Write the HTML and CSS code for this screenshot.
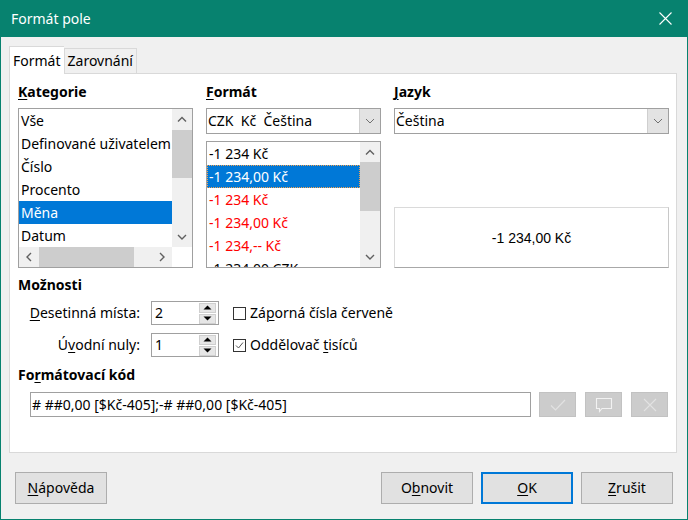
FILE: index.html
```html
<!DOCTYPE html>
<html lang="cs">
<head>
<meta charset="utf-8">
<title>Formát pole</title>
<link rel="stylesheet" href="styles.css">
</head>
<body>
<div class="window">
  <div class="titlebar">
    <span class="title">Formát pole</span>
    <svg class="close" width="13" height="13" viewBox="0 0 13 13"><path d="M0.5 0.5 L12.5 12.5 M12.5 0.5 L0.5 12.5" stroke="#fff" stroke-width="1.1" fill="none"/></svg>
  </div>
  <div class="content">
    <div class="tabs">
      <div class="tab active">Formát</div>
      <div class="tab">Zarovnání</div>
    </div>
    <div class="panel">
      <div class="top-grid">
        <div class="col">
          <div class="label"><u>K</u>ategorie</div>
          <div class="listbox cat">
            <div class="items">
              <div class="item">Vše</div>
              <div class="item">Definované uživatelem</div>
              <div class="item">Číslo</div>
              <div class="item">Procento</div>
              <div class="item sel">Měna</div>
              <div class="item">Datum</div>
            </div>
            <div class="vscroll">
              <span class="arr"><svg width="20" height="20" viewBox="0 0 20 20"><polyline points="6,12.5 10,8.5 14,12.5" fill="none" stroke="#606060" stroke-width="1.4"/></svg></span>
              <span class="track"><span class="thumb cat-thumb"></span></span>
              <span class="arr"><svg width="20" height="20" viewBox="0 0 20 20"><polyline points="6,8 10,12 14,8" fill="none" stroke="#606060" stroke-width="1.4"/></svg></span>
            </div>
            <div class="hscroll">
              <span class="arr"><svg width="20" height="20" viewBox="0 0 20 20"><polyline points="12,6 8,10 12,14" fill="none" stroke="#606060" stroke-width="1.4"/></svg></span>
              <span class="htrack"><span class="hthumb"></span></span>
              <span class="arr"><svg width="20" height="20" viewBox="0 0 20 20"><polyline points="8,6 12,10 8,14" fill="none" stroke="#606060" stroke-width="1.4"/></svg></span>
            </div>
            <div class="corner"></div>
          </div>
        </div>
        <div class="col">
          <div class="label"><u>F</u>ormát</div>
          <div class="combo">
            <span class="combo-text">CZK  Kč  Čeština</span>
            <span class="combo-btn"><svg width="10" height="6" viewBox="0 0 10 6"><polyline points="1,1 5,5 9,1" fill="none" stroke="#707070" stroke-width="1"/></svg></span>
          </div>
          <div class="listbox fmt">
            <div class="items">
              <div class="item">-1 234 Kč</div>
              <div class="item sel focus">-1 234,00 Kč</div>
              <div class="item red">-1 234 Kč</div>
              <div class="item red">-1 234,00 Kč</div>
              <div class="item red">-1 234,-- Kč</div>
              <div class="item">-1 234,00 CZK</div>
            </div>
            <div class="vscroll">
              <span class="arr"><svg width="20" height="20" viewBox="0 0 20 20"><polyline points="6,12.5 10,8.5 14,12.5" fill="none" stroke="#606060" stroke-width="1.4"/></svg></span>
              <span class="track"><span class="thumb fmt-thumb"></span></span>
              <span class="arr"><svg width="20" height="20" viewBox="0 0 20 20"><polyline points="6,8 10,12 14,8" fill="none" stroke="#606060" stroke-width="1.4"/></svg></span>
            </div>
          </div>
        </div>
        <div class="col">
          <div class="label"><u>J</u>azyk</div>
          <div class="combo">
            <span class="combo-text">Čeština</span>
            <span class="combo-btn"><svg width="10" height="6" viewBox="0 0 10 6"><polyline points="1,1 5,5 9,1" fill="none" stroke="#707070" stroke-width="1"/></svg></span>
          </div>
          <div class="preview">-1 234,00 Kč</div>
        </div>
      </div>

      <div class="label section-label">Možnosti</div>
      <div class="options">
        <span class="opt-label"><u>D</u>esetinná místa:</span>
        <div class="spin">
          <span class="spin-val">2</span>
          <span class="spin-btns">
            <span class="sb"><svg width="9" height="5" viewBox="0 0 9 5"><polygon points="0.5,4.5 4.5,0.5 8.5,4.5" fill="#000"/></svg></span>
            <span class="sb"><svg width="9" height="5" viewBox="0 0 9 5"><polygon points="0.5,0.5 4.5,4.5 8.5,0.5" fill="#000"/></svg></span>
          </span>
        </div>
        <label class="check"><span class="box"></span><span>Zá<u>p</u>orná čísla červeně</span></label>

        <span class="opt-label">Ú<u>v</u>odní nuly:</span>
        <div class="spin">
          <span class="spin-val">1</span>
          <span class="spin-btns">
            <span class="sb"><svg width="9" height="5" viewBox="0 0 9 5"><polygon points="0.5,4.5 4.5,0.5 8.5,4.5" fill="#000"/></svg></span>
            <span class="sb"><svg width="9" height="5" viewBox="0 0 9 5"><polygon points="0.5,0.5 4.5,4.5 8.5,0.5" fill="#000"/></svg></span>
          </span>
        </div>
        <label class="check"><span class="box"><svg width="11" height="11" viewBox="0 0 11 11"><polyline points="2,5.5 4.5,8 9,2.5" fill="none" stroke="#555" stroke-width="1"/></svg></span><span>Oddělovač <u>t</u>isíců</span></label>
      </div>

      <div class="label section-label code-label">Fo<u>r</u>mátovací kód</div>
      <div class="code-row">
        <div class="code-input"># ##0,00 [$Kč-405];-# ##0,00 [$Kč-405]</div>
        <span class="tool-btn"><svg width="16" height="12" viewBox="0 0 16 12"><polyline points="1,6.5 5.5,11 15,1" fill="none" stroke="#e2e2e2" stroke-width="1.2"/></svg></span>
        <span class="tool-btn"><svg width="18" height="16" viewBox="0 0 18 16"><path d="M1.5 1.5 H16.5 V11.5 H7 L4.5 14.5 V11.5 H1.5 Z" fill="none" stroke="#f2f2f2" stroke-width="1.1"/></svg></span>
        <span class="tool-btn"><svg width="14" height="14" viewBox="0 0 14 14"><path d="M1 1 L13 13 M13 1 L1 13" stroke="#e2e2e2" stroke-width="1.1" fill="none"/></svg></span>
      </div>
    </div>

    <div class="buttons">
      <span class="btn"><u>N</u>ápověda</span>
      <span class="spacer"></span>
      <span class="btn">O<u>b</u>novit</span>
      <span class="btn default"><u>O</u>K</span>
      <span class="btn"><u>Z</u>rušit</span>
    </div>
  </div>
</div>
</body>
</html>
```

FILE: styles.css
```css
html, body {
  margin: 0;
  padding: 0;
}
body {
  width: 688px;
  height: 520px;
  font-family: "Noto Sans", "Open Sans", sans-serif;
  font-size: 14px;
  line-height: 20px;
  color: #000;
  overflow: hidden;
}
u {
  text-decoration: underline;
  text-underline-offset: 2px;
  text-decoration-thickness: 1px;
}
.window {
  box-sizing: border-box;
  width: 688px;
  height: 520px;
  border: 1px solid #07826f;
  border-top: none;
  background: #f0f0f0;
  display: flex;
  flex-direction: column;
}
.titlebar {
  height: 37px;
  flex: none;
  background: #07826f;
  color: #fff;
  display: flex;
  align-items: center;
  justify-content: space-between;
  padding: 0 15px 0 10px;
}
.title {
  font-size: 14px;
}
.close {
  display: block;
}
.content {
  flex: 1;
  padding: 9px 10px 0 8px;
  display: flex;
  flex-direction: column;
}
.tabs {
  display: flex;
  height: 27px;
  align-items: flex-start;
}
.tab {
  box-sizing: border-box;
  height: 25px;
  margin-top: 2px;
  line-height: 24px;
  padding: 0 3px;
  border: 1px solid #d9d9d9;
  border-bottom: none;
  background: #f0f0f0;
  color: #000;
}
.tab.active {
  height: 28px;
  margin-top: 0;
  line-height: 27px;
  background: #fff;
  position: relative;
  z-index: 1;
  border-right: none;
}
.panel {
  box-sizing: border-box;
  height: 380px;
  background: #fff;
  border: 1px solid #d9d9d9;
  padding: 8px 7px 0 8px;
}
.top-grid {
  display: grid;
  grid-template-columns: 175px 175px 275px;
  column-gap: 13px;
}
.col {
  display: flex;
  flex-direction: column;
}
.label {
  font-weight: bold;
  height: 20px;
  margin-bottom: 6px;
}
.listbox {
  box-sizing: border-box;
  border: 1px solid #a0a0a0;
  background: #fff;
  display: grid;
  overflow: hidden;
}
.listbox.cat {
  height: 160px;
  grid-template-columns: 153px 20px;
  grid-template-rows: 138px 20px;
}
.listbox.fmt {
  height: 127px;
  margin-top: 7px;
  grid-template-columns: 153px 20px;
  grid-template-rows: 125px;
}
.items {
  overflow: hidden;
}
.item {
  box-sizing: border-box;
  height: 23px;
  line-height: 23px;
  padding-left: 2px;
  white-space: nowrap;
}
.item.sel {
  background: #0078d7;
  color: #fff;
}
.item.focus {
  border: 1px dotted #f3a251;
  line-height: 21px;
  padding-left: 1px;
}
.item.red {
  color: #ff0000;
}
.vscroll {
  background: #f0f0f0;
  display: flex;
  flex-direction: column;
}
.arr {
  width: 20px;
  height: 20px;
  flex: none;
  display: block;
}
.arr svg {
  display: block;
}
.track {
  flex: 1;
  display: block;
}
.thumb {
  display: block;
  background: #cdcdcd;
  width: 20px;
}
.cat-thumb {
  height: 48px;
  margin-top: 1px;
}
.fmt-thumb {
  height: 49px;
}
.hscroll {
  background: #f0f0f0;
  display: flex;
}
.htrack {
  flex: 1;
  display: block;
}
.hthumb {
  display: block;
  width: 95px;
  height: 20px;
  background: #cdcdcd;
}
.corner {
  background: #fff;
}
.combo {
  box-sizing: border-box;
  height: 26px;
  border: 1px solid #a0a0a0;
  background: #fff;
  display: flex;
}
.combo-text {
  flex: 1;
  padding-left: 1px;
  line-height: 24px;
  white-space: pre;
}
.combo-btn {
  width: 20px;
  background: #e3e3e3;
  border-left: 1px solid #cfcfcf;
  display: flex;
  align-items: center;
  justify-content: center;
}
.combo-btn svg {
  display: block;
}
.preview {
  box-sizing: border-box;
  margin-top: auto;
  height: 61px;
  border: 1px solid #dadada;
  border-right-color: #c8c8c8;
  border-bottom-color: #a8a8a8;
  display: flex;
  align-items: center;
  justify-content: center;
  font-family: "Liberation Sans", Arial, sans-serif;
  font-size: 14px;
}
.section-label {
  margin-top: 7px;
  margin-bottom: 6px;
}
.options {
  display: grid;
  grid-template-columns: 122px 68px auto;
  grid-auto-rows: 24px;
  column-gap: 11px;
  row-gap: 8px;
  align-items: center;
}
.opt-label {
  text-align: right;
  white-space: nowrap;
}
.spin {
  box-sizing: border-box;
  height: 24px;
  border: 1px solid #a0a0a0;
  display: flex;
  align-items: center;
  padding: 1px;
}
.spin-val {
  flex: 1;
  padding-left: 2px;
}
.spin-btns {
  display: flex;
  flex-direction: column;
  gap: 1px;
  width: 17px;
  margin-right: 1px;
}
.sb {
  box-sizing: border-box;
  height: 10px;
  background: #e6e6e6;
  border: 1px solid #cfcfcf;
  display: flex;
  align-items: center;
  justify-content: center;
}
.sb svg {
  display: block;
}
.check {
  display: flex;
  align-items: center;
  gap: 4px;
  margin-left: 3px;
  white-space: nowrap;
}
.box {
  box-sizing: border-box;
  width: 13px;
  height: 13px;
  border: 1px solid #333;
  background: #fff;
  display: flex;
  align-items: center;
  justify-content: center;
}
.box svg {
  display: block;
}
.code-label {
  margin-top: 8px;
  margin-bottom: 7px;
}
.code-row {
  display: flex;
  gap: 8px;
  padding-left: 12px;
}
.code-input {
  box-sizing: border-box;
  width: 501px;
  height: 25px;
  border: 1px solid #a0a0a0;
  line-height: 23px;
  padding-left: 1px;
  white-space: pre;
}
.tool-btn {
  box-sizing: border-box;
  width: 37px;
  height: 25px;
  background: #cccccc;
  border: 1px solid #c2c2c2;
  display: flex;
  align-items: center;
  justify-content: center;
}
.tool-btn + .tool-btn {
  margin-left: 1px;
}
.tool-btn svg {
  display: block;
}
.buttons {
  display: flex;
  gap: 8px;
  margin-top: 19px;
  padding: 0 4px 0 6px;
}
.spacer {
  flex: 1;
}
.btn {
  box-sizing: border-box;
  width: 92px;
  height: 32px;
  border: 1px solid #adadad;
  background: #e1e1e1;
  text-align: center;
  line-height: 30px;
}
.btn.default {
  border: 2px solid #0078d7;
  line-height: 28px;
}
```
